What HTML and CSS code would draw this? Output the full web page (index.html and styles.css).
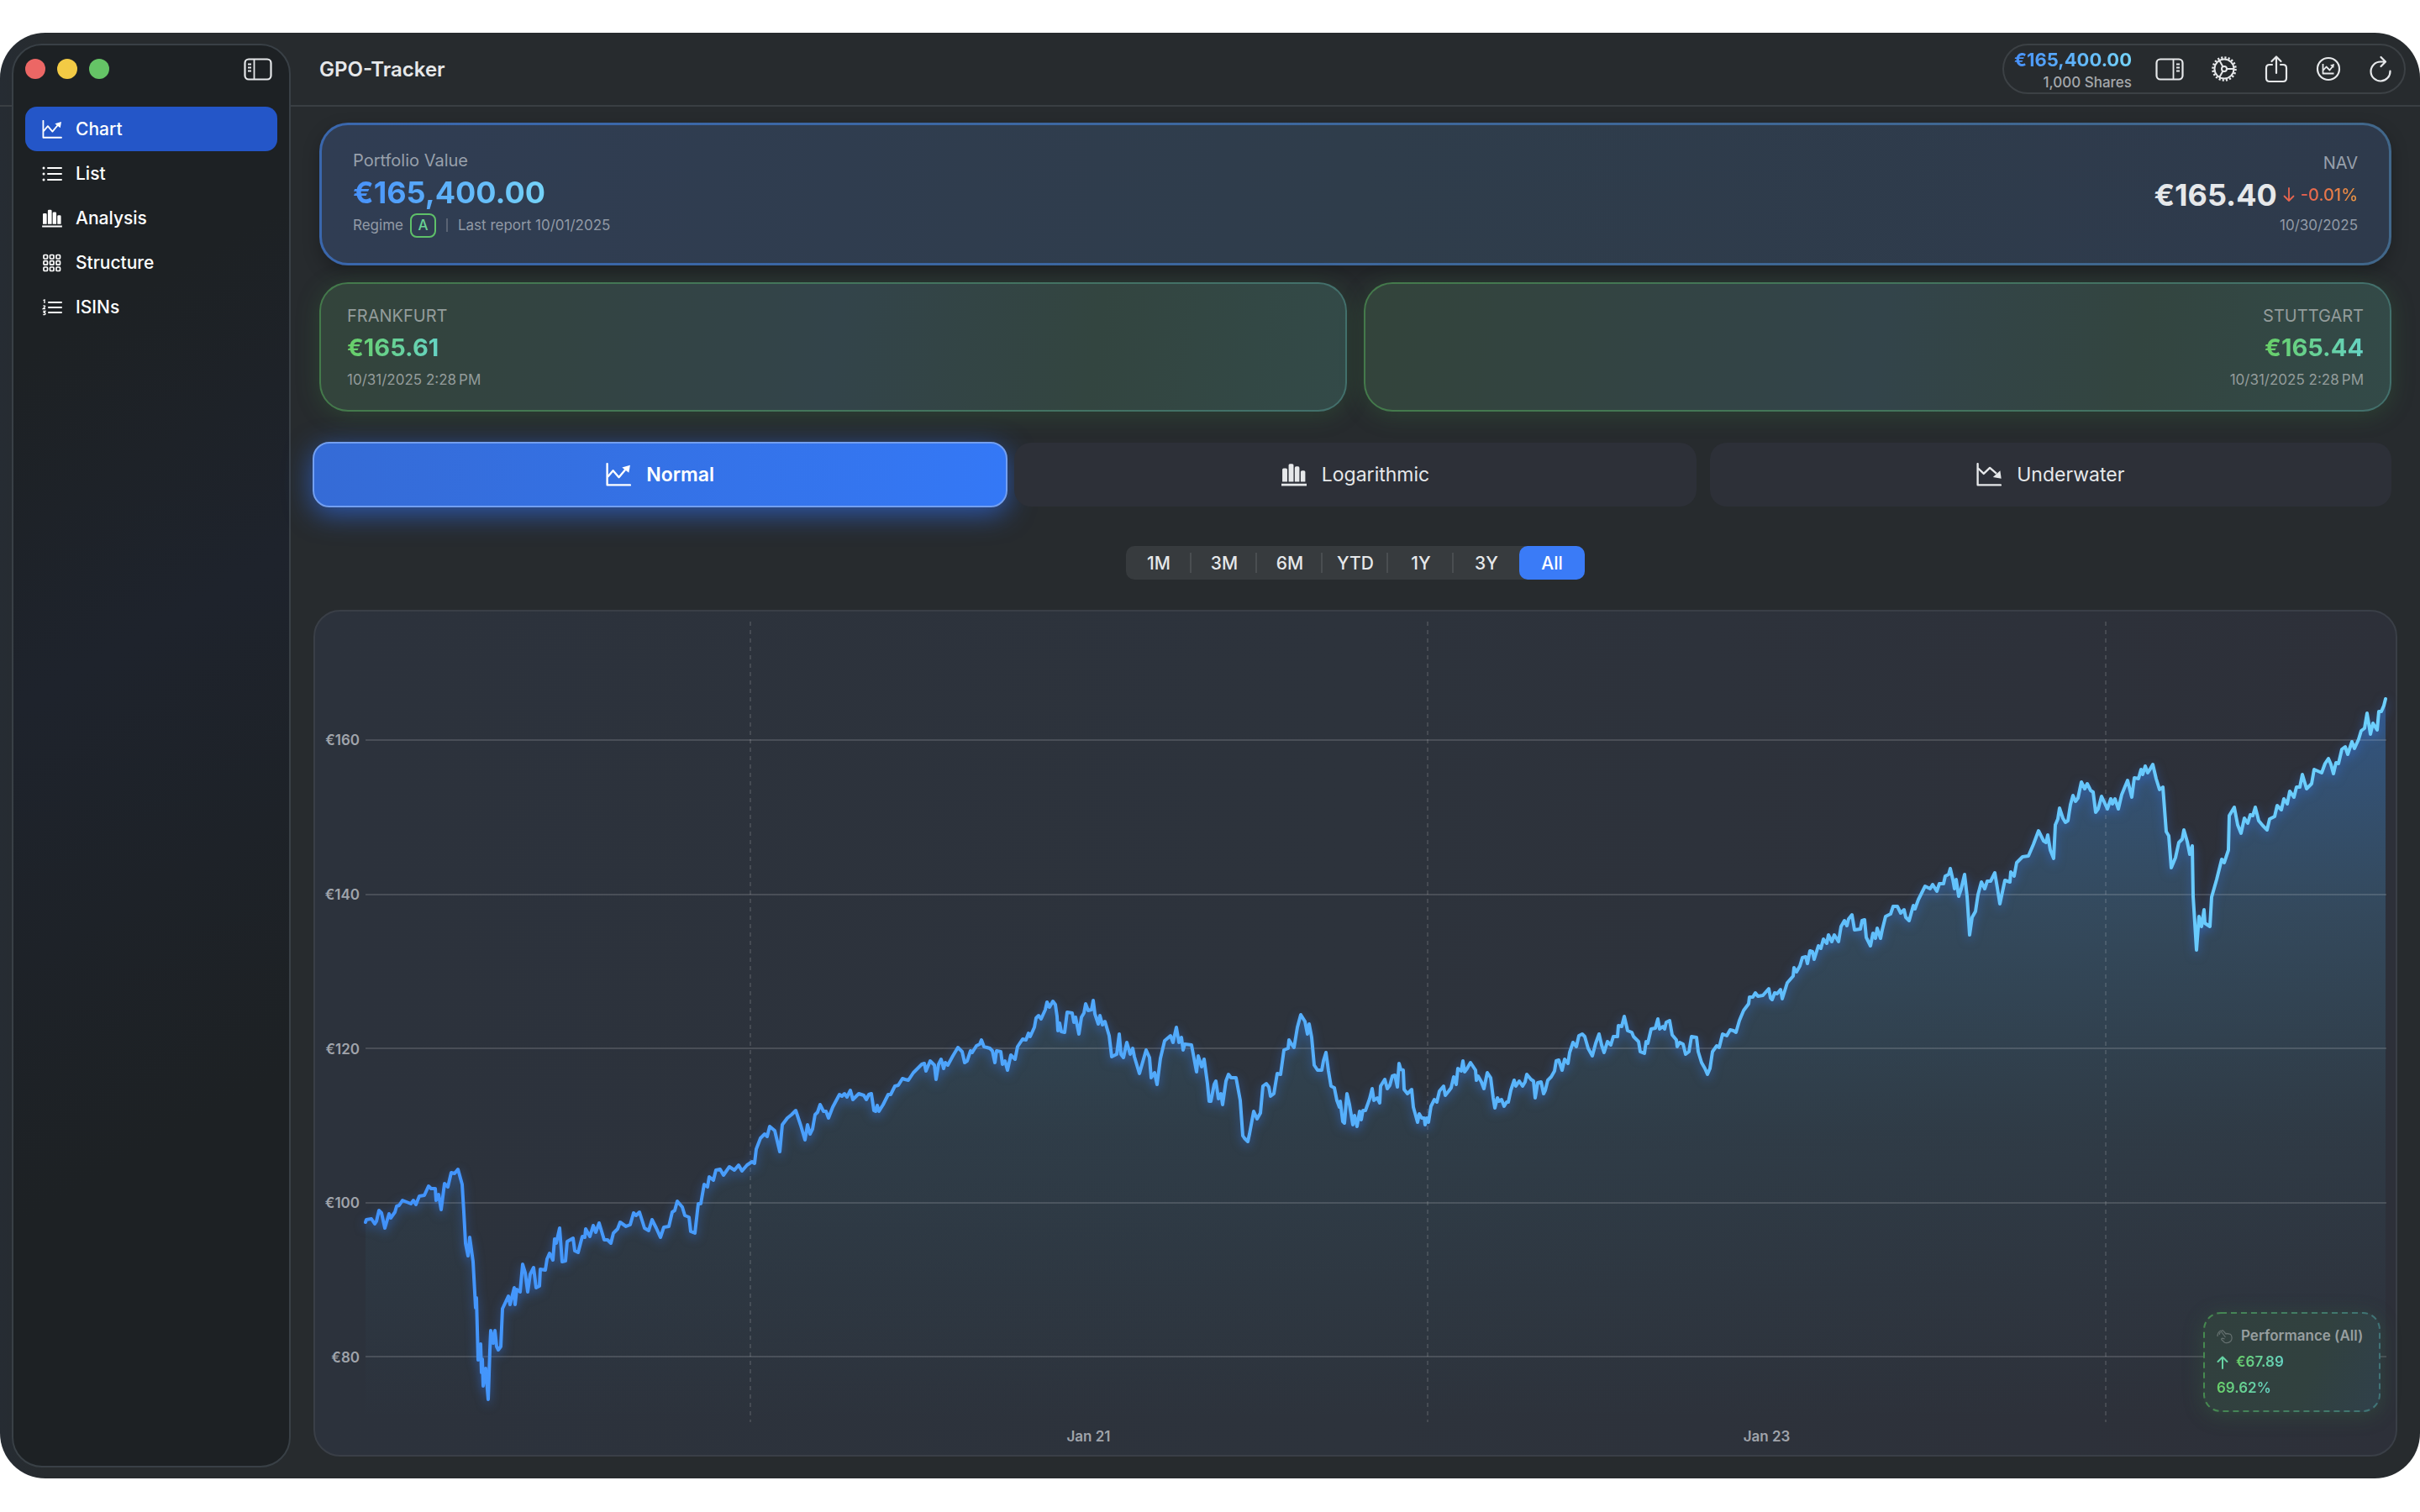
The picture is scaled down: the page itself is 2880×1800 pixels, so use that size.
FILE: index.html
```html
<!DOCTYPE html>
<html lang="en">
<head>
    <meta charset="UTF-8">
    <meta name="viewport" content="width=device-width, initial-scale=1.0">
    <title>GPO-Tracker</title>
    <link rel="stylesheet" href="styles.css">
</head>
<body>
    <!-- Shared icons -->
    <svg class="defs" width="0" height="0" aria-hidden="true">
        <symbol id="icon-up" viewBox="0 0 28 26">
            <path d="M1.500 1v23.500H27" fill="none" stroke="currentColor" stroke-width="2.200" stroke-linecap="round" stroke-linejoin="round"/>
            <path d="M2 15.500l6-7 6.500 7.500 8-9.500" fill="none" stroke="currentColor" stroke-width="2.200" stroke-linejoin="round"/>
            <path d="M27 2.500l-1.500 8.500-7.500-6z" fill="currentColor"/>
        </symbol>
        <symbol id="icon-down" viewBox="0 0 28 26">
            <path d="M1.500 1v23.500H27" fill="none" stroke="currentColor" stroke-width="2.200" stroke-linecap="round" stroke-linejoin="round"/>
            <path d="M2 6l6.200 6L15 5.500l7.500 6.500" fill="none" stroke="currentColor" stroke-width="2.200" stroke-linejoin="round"/>
            <path d="M26.500 8.500l1.200 9-9.200-1.700z" fill="currentColor"/>
        </symbol>
        <symbol id="icon-bars" viewBox="0 0 28 26">
            <path d="M1 7.500q0-1.500 1.500-1.500h2.500q1.500 0 1.500 1.500V21H1zM8 2.500Q8 1 9.500 1H12q1.500 0 1.500 1.500V21H8zM14.800 5.500q0-1.500 1.500-1.500h2.200q1.500 0 1.500 1.500V21h-5.200zM21.400 10q0-1.500 1.500-1.500H25q1.500 0 1.500 1.500v11h-5.100zM0 23h28v2.500H0z" fill="currentColor"/>
        </symbol>
        <symbol id="icon-list" viewBox="0 0 24 20">
            <path d="M7 3h16M7 10h16M7 17h16" stroke="currentColor" stroke-width="2" stroke-linecap="round"/>
            <circle cx="2" cy="3" r="1.500" fill="currentColor"/><circle cx="2" cy="10" r="1.500" fill="currentColor"/><circle cx="2" cy="17" r="1.500" fill="currentColor"/>
        </symbol>
        <symbol id="icon-grid" viewBox="0 0 24 22">
            <g fill="none" stroke="currentColor" stroke-width="1.700">
                <rect x="2" y="1.500" width="4.500" height="4.500" rx="1"/><rect x="9.500" y="1.500" width="4.500" height="4.500" rx="1"/><rect x="17" y="1.500" width="4.500" height="4.500" rx="1"/>
                <rect x="2" y="8.700" width="4.500" height="4.500" rx="1"/><rect x="9.500" y="8.700" width="4.500" height="4.500" rx="1"/><rect x="17" y="8.700" width="4.500" height="4.500" rx="1"/>
                <rect x="2" y="16" width="4.500" height="4.500" rx="1"/><rect x="9.500" y="16" width="4.500" height="4.500" rx="1"/><rect x="17" y="16" width="4.500" height="4.500" rx="1"/>
            </g>
        </symbol>
        <symbol id="icon-numbers" viewBox="0 0 24 20">
            <path d="M8 4h15M8 10h15M8 16h15" stroke="currentColor" stroke-width="2" stroke-linecap="round"/>
            <path d="M1.500 1.700L3 1v4M1.300 8.300q1.500-1 2.300 0 .2.900-2.200 3.200h2.600M1.300 14.500h2.500l-1.500 1.700q1.700 0 1.700 1.400-.4 1.600-2.800.9" fill="none" stroke="currentColor" stroke-width="1.300"/>
        </symbol>
        <symbol id="icon-panel" viewBox="0 0 34 27">
            <rect x="1.500" y="1.500" width="31" height="24" rx="4.500" fill="none" stroke="currentColor" stroke-width="2.200"/>
            <path d="M12.500 2v23M5 7.500h4M5 11.500h4M5 15.500h4" fill="none" stroke="currentColor" stroke-width="1.800"/>
        </symbol>
    </svg>

    <div class="window">
        <aside class="sidebar">
            <div class="sidebar-top">
                <span class="light red"></span>
                <span class="light yellow"></span>
                <span class="light green"></span>
                <button class="icon-btn toggle" aria-label="Toggle sidebar"><svg width="34" height="27"><use href="#icon-panel"/></svg></button>
            </div>
            <nav>
                <a href="#chart" class="active"><svg><use href="#icon-up"/></svg>Chart</a>
                <a href="#list"><svg><use href="#icon-list"/></svg>List</a>
                <a href="#analysis"><svg><use href="#icon-bars"/></svg>Analysis</a>
                <a href="#structure"><svg><use href="#icon-grid"/></svg>Structure</a>
                <a href="#isins"><svg><use href="#icon-numbers"/></svg>ISINs</a>
            </nav>
        </aside>

        <header>
            <h1>GPO-Tracker</h1>
            <div class="toolbar">
                <div class="summary">
                    <strong class="blue-text">€165,400.00</strong>
                    <span>1,000 Shares</span>
                </div>
                <button class="icon-btn" aria-label="Toggle inspector"><svg class="flip" width="34" height="27"><use href="#icon-panel"/></svg></button>
                <button class="icon-btn" aria-label="Settings">
                    <svg width="34" height="32" viewBox="0 0 34 32" fill="none" stroke="currentColor" stroke-width="2">
                        <circle cx="17" cy="16" r="13.500" stroke-width="2.600" stroke-dasharray="2.200 2.040"/>
                        <circle cx="17" cy="16" r="11.500"/>
                        <circle cx="17" cy="16" r="3"/>
                        <path d="M20 16h8.500M15.500 13.400l-4.200-7.300M15.500 18.600l-4.200 7.300"/>
                    </svg>
                </button>
                <button class="icon-btn" aria-label="Share">
                    <svg width="34" height="34" viewBox="0 0 34 34" fill="none" stroke="currentColor" stroke-width="2.200" stroke-linecap="round" stroke-linejoin="round">
                        <path d="M12 12H9q-4 0-4 4v12q0 4 4 4h16q4 0 4-4V16q0-4-4-4h-3M17 22V3M11.500 8L17 2.500 22.500 8"/>
                    </svg>
                </button>
                <button class="icon-btn" aria-label="Performance">
                    <svg width="34" height="32" viewBox="0 0 34 32" fill="none" stroke="currentColor" stroke-width="2.200">
                        <circle cx="17" cy="16" r="13"/>
                        <path d="M10.500 10v11.500h13M11 17.500l3.500-4 4 4 4-5" stroke-width="1.800" stroke-linejoin="round"/>
                        <path d="M24 10l-.8 5-4.200-3.500z" fill="currentColor" stroke="none"/>
                    </svg>
                </button>
                <button class="icon-btn" aria-label="Refresh">
                    <svg width="34" height="34" viewBox="0 0 34 34" fill="none" stroke="currentColor" stroke-width="2.200" stroke-linecap="round" stroke-linejoin="round">
                        <path d="M28.500 19.500A11.500 11.500 0 1 1 17 8.500h5M17.500 3l5.500 5.500-5.500 5.500"/>
                    </svg>
                </button>
            </div>
        </header>

        <main>
            <!-- Portfolio -->
            <section class="card portfolio">
                <div>
                    <h2>Portfolio Value</h2>
                    <strong class="big blue-text">€165,400.00</strong>
                    <p class="small report">Regime <span class="badge">A</span> <i></i> Last report 10/01/2025</p>
                </div>
                <div class="right">
                    <h2>NAV</h2>
                    <div class="nav-value">
                        <strong class="big">€165.40</strong>
                        <svg width="14" height="20" viewBox="0 0 14 20" fill="none" stroke="#e8654f" stroke-width="1.800" stroke-linecap="round" stroke-linejoin="round"><path d="M7 2v15M1.500 11.500L7 17l5.500-5.500"/></svg>
                        <span class="change">-0.01%</span>
                    </div>
                    <p class="small">10/30/2025</p>
                </div>
            </section>

            <!-- Exchanges -->
            <div class="exchanges">
                <section class="card exchange">
                    <h2>FRANKFURT</h2>
                    <strong class="price green-text">€165.61</strong>
                    <p class="small">10/31/2025 2:28&#8239;PM</p>
                </section>
                <section class="card exchange right">
                    <h2>STUTTGART</h2>
                    <strong class="price green-text">€165.44</strong>
                    <p class="small">10/31/2025 2:28&#8239;PM</p>
                </section>
            </div>

            <!-- Chart mode -->
            <div class="modes">
                <button class="active"><svg width="30" height="28"><use href="#icon-up"/></svg>Normal</button>
                <button><svg width="30" height="28"><use href="#icon-bars"/></svg>Logarithmic</button>
                <button><svg width="30" height="28"><use href="#icon-down"/></svg>Underwater</button>
            </div>

            <!-- Time range -->
            <div class="ranges">
                <button>1M</button>
                <button>3M</button>
                <button>6M</button>
                <button>YTD</button>
                <button>1Y</button>
                <button>3Y</button>
                <button class="active">All</button>
            </div>

            <section class="chart">
                <div class="y-axis">
                    <span>€160</span>
                    <span>€140</span>
                    <span>€120</span>
                    <span>€100</span>
                    <span>€80</span>
                </div>
                <svg class="plot" viewBox="0 0 2405 953" preserveAspectRatio="none" role="img" aria-label="NAV history">
                    <defs>
                        <linearGradient id="lineColor" gradientUnits="userSpaceOnUse" x1="0" y1="0" x2="2405" y2="0">
                            <stop offset="0" stop-color="#4192fb"/>
                            <stop offset="1" stop-color="#6dd0fc"/>
                        </linearGradient>
                        <linearGradient id="areaColor" gradientUnits="userSpaceOnUse" x1="0" y1="92" x2="0" y2="953">
                            <stop offset="0" stop-color="#3a8cf0" stop-opacity=".4"/>
                            <stop offset=".3" stop-color="#4a9ad0" stop-opacity=".23"/>
                            <stop offset=".6" stop-color="#46a0c0" stop-opacity=".09"/>
                            <stop offset="1" stop-color="#46a0c0" stop-opacity="0"/>
                        </linearGradient>
                    </defs>
                    <path id="area" fill="url(#areaColor)"/>
                    <g class="grid">
                        <path d="M0 141H2405M0 325H2405M0 508H2405M0 692H2405M0 875H2405"/>
                        <path class="dashed" d="M458 0V953M1264 0V953M2071 0V953"/>
                    </g>
                    <path id="line" stroke="url(#lineColor)"/>
                </svg>
                <div class="x-axis">
                    <span></span>
                    <span>Jan 21</span>
                    <span>Jan 23</span>
                    <span></span>
                </div>

                <div class="performance">
                    <svg class="outline" aria-hidden="true">
                        <defs>
                            <linearGradient id="outlineColor" x1="0" y1="0" x2="1" y2="0">
                                <stop offset="0" stop-color="#46894f"/>
                                <stop offset="1" stop-color="#3f7377"/>
                            </linearGradient>
                        </defs>
                        <rect x="1" y="1" rx="20"/>
                    </svg>
                    <div class="perf-title">
                        <svg width="20" height="18" viewBox="0 0 20 18" fill="none" stroke="currentColor" stroke-width="1.200" stroke-linejoin="round"><path d="M1 9Q1 4 5 2M10.500 10L6 4q-.8-1.800.6-2.200 1-.1 1.600.8L11 6q1-1 2 0 1-.8 2 .3 1.500-.5 2.500 1.700 1.500 4-.7 6.500-3 3.300-7.300 1.700L6 13q-1-1.300.5-1.800l3 .6M3.500 7Q3 5 4.700 4"/></svg>
                        Performance (All)
                    </div>
                    <div class="perf-row">
                        <svg width="14" height="16" viewBox="0 0 14 16" fill="none" stroke="#66d3a4" stroke-width="2" stroke-linecap="round" stroke-linejoin="round"><path d="M7 15V1.500M1.500 7L7 1.500 12.500 7"/></svg>
                        <span class="green-text">€67.89</span>
                    </div>
                    <div class="perf-row"><span class="green-text">69.62%</span></div>
                </div>
            </section>
        </main>
    </div>

    <script src="chart.js"></script>
</body>
</html>
```
FILE: styles.css
```css
* {
    box-sizing: border-box;
}
body {
    margin: 0;
    padding: 39px 0 40px;
    min-height: 100vh;
    display: flex;
    background: #fff;
    color: #e6e8ea;
    font-family: Inter, "Liberation Sans", sans-serif;
}
h1, h2, p {
    margin: 0;
}
button {
    border: none;
    padding: 0;
    background: none;
    color: inherit;
    font-family: inherit;
}
svg {
    flex: none;
}
.defs {
    position: absolute;
}
.window {
    flex: 1;
    display: grid;
    grid-template-columns: 346px 1fr;
    grid-template-rows: 88px 1fr;
    border-radius: 54px;
    overflow: hidden;
    background: linear-gradient(#3a3f43, #3a3f43) 0 86px / 100% 2px no-repeat, linear-gradient(90deg, #262c33, #272b2e 2%);
}

/* Sidebar */
.sidebar {
    grid-row: 1 / 3;
    margin: 13px 0 13px 14px;
    padding: 0 14px;
    border: 2px solid #394046;
    border-radius: 36px;
    background: linear-gradient(150deg, #1d2124 20%, #1e232c 42%, #1d2124 75%);
}
.sidebar-top {
    display: flex;
    align-items: center;
    gap: 14px;
    height: 56px;
    margin-bottom: 17px;
}
.light {
    width: 24px;
    height: 24px;
    border-radius: 50%;
}
.red {
    background: #ec6765;
}
.yellow {
    background: #f3cb45;
}
.green {
    background: #65c466;
}
.icon-btn {
    display: flex;
    align-items: center;
    justify-content: center;
}
.toggle {
    margin-left: auto;
    margin-right: 6px;
}
.flip {
    transform: scaleX(-1);
}
nav a {
    display: flex;
    align-items: center;
    gap: 16px;
    height: 53px;
    padding-left: 20px;
    border-radius: 14px;
    color: #fff;
    font-size: 21px;
    font-weight: 500;
    text-decoration: none;
}
nav a svg {
    width: 24px;
    height: 22px;
}
nav a.active {
    background: #2456c8;
}

/* Title bar */
header {
    display: flex;
    align-items: center;
    justify-content: space-between;
    padding: 0 17px 2px 34px;
}
h1 {
    font-size: 24px;
    font-weight: 600;
}
.toolbar {
    display: flex;
    align-items: center;
    gap: 28px;
    height: 60px;
    padding: 0 11px 0 12px;
    border: 2px solid #3c4145;
    border-radius: 30px;
}
.summary {
    display: flex;
    flex-direction: column;
    align-items: flex-end;
    gap: 4px;
    padding-top: 3px;
    font-size: 17px;
    font-weight: 500;
    line-height: 22px;
    color: #a5a8ab;
}
.summary strong {
    font-size: 22px;
    line-height: 24px;
}
.summary + .icon-btn {
    margin-right: 3px;
}
.blue-text, .green-text, .change {
    background: linear-gradient(90deg, #4791fb, #75d3f8);
    background-clip: text;
    -webkit-background-clip: text;
    color: transparent;
}
.green-text {
    background-image: linear-gradient(90deg, #68cf66, #66d3c4);
}
.change {
    background-image: linear-gradient(90deg, #e75d50, #e99543);
    font-size: 20px;
    font-weight: 500;
}

/* Cards */
main {
    display: flex;
    flex-direction: column;
    padding: 19px 34px 26px;
}
.card {
    border: 3px solid transparent;
    border-radius: 34px;
}
.card h2 {
    color: #98a0ab;
    font-size: 20px;
    font-weight: 400;
    line-height: 24px;
}
.small {
    color: #929aa6;
    font-size: 17px;
    line-height: 24px;
}
.big {
    font-size: 36px;
    line-height: 48px;
}
.right {
    text-align: right;
}
.portfolio {
    display: flex;
    justify-content: space-between;
    align-items: center;
    height: 170px;
    padding: 0 37px;
    background: linear-gradient(90deg, #303d53, #2f3d4b 50%, #2e3a4c) padding-box, linear-gradient(90deg, #3a67ad, #41678a) border-box;
    box-shadow: 0 8px 20px rgba(0, 0, 0, .25);
}
.portfolio > div {
    display: flex;
    flex-direction: column;
    align-items: flex-start;
}
.portfolio h2 {
    margin-bottom: 2px;
}
.portfolio > .right {
    align-items: flex-end;
}
.report {
    display: flex;
    align-items: center;
    gap: 8px;
    height: 30px;
}
.report i {
    width: 2px;
    height: 16px;
    margin: 0 4px;
    background: #596373;
}
.badge {
    width: 31px;
    height: 29px;
    border: 2px solid #5fc069;
    border-radius: 8px;
    color: #69d394;
    font-weight: 500;
    text-align: center;
}
.nav-value {
    display: flex;
    align-items: center;
    gap: 7px;
}
.exchanges {
    display: grid;
    grid-template-columns: 1fr 1fr;
    gap: 20px;
    margin-top: 20px;
}
.exchange {
    display: flex;
    flex-direction: column;
    align-items: flex-start;
    justify-content: center;
    height: 154px;
    padding: 2px 31px 0;
    border-width: 2px;
    background: linear-gradient(100deg, #33443b, #33444a 50%, #334540 75%, #334a48) padding-box, linear-gradient(90deg, #447a4b, #43706c) border-box;
    box-shadow: 0 4px 28px rgba(60, 130, 70, .28);
}
.exchange.right {
    align-items: flex-end;
}
.exchange h2, .exchange .small {
    color: #939c9b;
}
.price {
    font-size: 29px;
    line-height: 52px;
}

/* Chart controls */
.modes {
    display: grid;
    grid-template-columns: repeat(3, 1fr);
    gap: 16px;
    margin-top: 37px;
}
.modes button {
    display: flex;
    align-items: center;
    justify-content: center;
    gap: 18px;
    height: 76px;
    border-radius: 20px;
    background: #2d3038;
    font-size: 23px;
}
.modes .active {
    height: 78px;
    margin: -1px -8px;
    border: 2px solid #739ff0;
    background: linear-gradient(90deg, #356bd6, #3478f6);
    color: #fff;
    font-weight: 600;
    box-shadow: 0 8px 32px rgba(48, 110, 240, .65);
}
.ranges {
    display: flex;
    align-self: center;
    margin-top: 47px;
    border-radius: 10px;
    background: #373b3e;
}
.ranges button {
    width: 78px;
    height: 40px;
    background: linear-gradient(#4a4e51, #4a4e51) right / 2px 24px no-repeat;
    font-size: 21px;
    font-weight: 500;
}
.ranges button:nth-child(6) {
    background: none;
}
.ranges .active {
    border-radius: 10px;
    background: #3a7bf7;
    color: #fff;
}

/* Chart */
.chart {
    position: relative;
    flex: 1;
    display: grid;
    grid-template-columns: 53px 1fr;
    grid-template-rows: 1fr 34px;
    column-gap: 7px;
    margin: 36px -7px 0;
    padding: 12px 11px 5px 0;
    border: 2px solid #3a3f47;
    border-radius: 32px;
    background: linear-gradient(90deg, #2c323c, #2d333c 50%, #2d3039);
    color: #a0a4ab;
    font-size: 17px;
    font-weight: 600;
    line-height: 20px;
}
.y-axis {
    display: flex;
    flex-direction: column;
    justify-content: space-between;
    align-items: flex-end;
    padding: 131px 0 67px;
}
.plot {
    width: 100%;
    height: 100%;
    min-height: 0;
    overflow: visible;
}
.grid path {
    stroke: rgba(255, 255, 255, .14);
    stroke-width: 2;
    vector-effect: non-scaling-stroke;
}
.grid .dashed {
    stroke: rgba(255, 255, 255, .12);
    stroke-dasharray: 5 5;
}
#line {
    fill: none;
    stroke-width: 4;
    stroke-linejoin: round;
    stroke-linecap: round;
    vector-effect: non-scaling-stroke;
    filter: drop-shadow(0 4px 6px rgba(50, 120, 240, .5));
}
.x-axis {
    grid-column: 2;
    display: grid;
    grid-template-columns: 457fr 807fr 807fr 334fr;
    align-items: center;
    text-align: center;
}

/* Performance box */
.performance {
    position: absolute;
    right: 18px;
    bottom: 51px;
    width: 211px;
    padding: 13px 16px;
    border-radius: 21px;
    background: linear-gradient(110deg, #31403e, #31413f 60%, #30404a);
    box-shadow: 0 4px 24px rgba(60, 130, 70, .25);
    color: #979e9f;
    font-size: 17px;
    line-height: 31px;
    white-space: nowrap;
}
.outline {
    position: absolute;
    left: 0;
    top: 0;
    width: 100%;
    height: 100%;
}
.outline rect {
    width: calc(100% - 2px);
    height: calc(100% - 2px);
    fill: none;
    stroke: url(#outlineColor);
    stroke-width: 2;
    stroke-dasharray: 7 5;
}
.perf-title, .perf-row {
    display: flex;
    align-items: center;
    gap: 9px;
}
.perf-title svg {
    opacity: .5;
}
```
FILE: chart.js
```js
// x,y pairs in plot units (2405 x 953)
const points = `0,715 1,712 7,711 11,717 13,714 16,701 19,704 23,722 28,705 30,710 35,703 37,696 40,695 44,689 49,691 54,693 57,689 60,694 64,684 70,683
75,672 78,675 83,675 84,689 87,682 90,700 94,669 98,673 102,656 106,657 110,652 115,670 117,703 119,740 122,755 124,733 128,762 131,817 132,805 134,879
137,860 138,894 139,878 140,910 143,889 146,926 148,867 149,844 152,859 154,844 156,863 158,867 161,863 163,818 170,803 172,813 177,793 178,813 180,795 184,798
187,765 190,775 193,798 196,777 200,769 203,793 207,791 208,771 214,772 216,759 219,752 223,760 225,735 227,740 231,722 234,762 238,761 240,738 247,734 249,749
253,751 258,732 261,733 262,723 267,732 271,719 274,727 278,716 284,736 288,736 292,740 295,728 300,723 303,715 310,720 315,718 319,704 322,707 326,703 332,722
337,725 341,712 346,722 351,733 355,721 361,720 365,703 368,701 371,690 377,697 380,707 385,709 387,726 392,728 396,693 399,693 403,670 407,673 409,661 414,665
417,653 422,652 426,659 433,649 439,653 444,647 448,654 454,647 460,643 463,645 465,628 470,615 475,610 478,613 481,601 487,606 493,631 496,599 502,591 507,587
512,582 518,600 523,617 526,599 529,610 532,604 535,587 538,584 541,575 545,583 548,583 551,591 556,578 564,563 567,565 570,562 573,566 577,558 580,569 587,562
593,564 596,569 599,563 602,562 605,582 607,583 609,576 611,583 616,575 622,563 625,563 630,553 634,552 639,544 642,545 646,546 652,537 656,533 662,527 665,526
667,535 672,523 677,528 679,545 682,527 685,521 688,532 690,525 693,528 699,517 705,507 710,512 713,525 716,523 720,511 722,513 727,505 731,503 733,498 736,506
743,508 746,511 749,525 751,511 756,512 758,527 761,523 764,534 768,516 773,521 776,506 782,497 786,498 789,490 791,494 796,483 798,472 801,469 804,473 809,462
811,453 814,459 818,452 821,456 823,470 824,487 826,478 828,488 832,489 835,465 841,466 843,477 845,471 849,491 852,471 855,466 857,455 860,463 864,462 866,451
868,467 872,479 874,469 877,480 880,476 885,493 888,518 894,515 897,491 899,515 902,519 906,501 910,515 913,508 915,518 921,538 925,524 929,510 933,519 935,543
939,537 942,551 946,520 951,499 958,493 961,501 965,483 968,501 971,495 973,510 975,503 983,504 986,520 989,536 991,517 995,530 998,521 1002,550 1004,571 1006,571
1010,551 1012,547 1015,568 1018,562 1020,575 1024,547 1027,539 1030,543 1036,543 1041,570 1044,612 1046,615 1050,619 1052,610 1057,583 1061,592 1065,585 1068,553 1072,550 1075,554
1077,565 1081,562 1085,538 1089,539 1093,510 1098,508 1099,498 1102,503 1105,507 1109,483 1113,468 1118,476 1121,491 1123,479 1126,495 1129,528 1133,534 1138,534 1140,523 1143,513
1146,535 1149,553 1153,555 1156,570 1159,578 1160,571 1163,595 1165,597 1168,562 1171,575 1175,599 1177,588 1180,601 1183,583 1185,593 1187,582 1190,582 1195,568 1198,556 1200,570
1204,567 1207,573 1208,553 1213,545 1216,556 1219,552 1222,541 1225,540 1228,554 1230,526 1232,533 1235,534 1236,557 1240,562 1245,557 1247,578 1252,596 1254,586 1257,591 1260,591
1261,599 1263,591 1265,596 1268,577 1272,569 1275,572 1278,559 1283,553 1285,564 1289,559 1292,555 1295,542 1298,551 1300,532 1304,535 1306,523 1308,536 1311,532 1315,525 1321,534
1322,546 1324,541 1328,548 1331,556 1335,537 1339,543 1342,567 1344,579 1347,567 1349,571 1352,569 1355,577 1358,572 1360,572 1363,558 1367,546 1369,553 1373,547 1377,553 1380,548
1382,539 1387,545 1390,547 1392,567 1395,549 1399,548 1402,562 1404,558 1407,546 1411,542 1415,535 1417,523 1420,522 1424,534 1427,521 1431,526 1433,513 1437,501 1441,506 1444,493
1448,491 1451,494 1455,508 1460,517 1464,502 1468,491 1471,504 1474,513 1478,500 1482,504 1485,494 1490,494 1491,481 1495,482 1498,470 1502,487 1507,489 1509,494 1515,500 1517,512
1522,514 1524,500 1526,502 1530,485 1535,484 1538,473 1540,485 1544,482 1546,485 1548,477 1552,475 1555,492 1560,498 1561,506 1564,501 1568,503 1571,515 1575,512 1578,494 1584,495
1586,512 1590,525 1594,532 1597,539 1600,532 1603,512 1608,505 1611,507 1615,491 1620,493 1624,486 1628,487 1631,489 1635,475 1640,463 1646,455 1647,447 1651,447 1654,442 1657,446
1663,445 1670,437 1672,448 1674,450 1677,442 1680,443 1684,438 1686,449 1692,430 1699,422 1700,412 1703,417 1707,410 1710,400 1714,399 1716,407 1719,392 1722,393 1724,402 1729,386
1732,389 1735,378 1739,383 1741,373 1745,381 1748,373 1753,381 1756,363 1760,356 1763,362 1765,354 1769,349 1772,367 1779,366 1781,356 1784,355 1786,376 1791,386 1794,371 1797,377
1799,365 1803,377 1805,367 1809,351 1815,348 1818,339 1823,339 1827,347 1831,343 1833,352 1837,356 1842,338 1844,342 1848,331 1856,315 1862,318 1865,313 1870,321 1873,312 1878,312
1880,303 1884,301 1886,294 1889,307 1891,318 1893,307 1896,327 1899,318 1903,301 1906,327 1909,373 1912,352 1916,345 1919,325 1923,310 1927,318 1930,309 1934,309 1939,299 1942,317
1945,336 1951,308 1957,310 1958,298 1962,303 1965,287 1972,280 1979,279 1985,265 1991,249 1997,261 2000,263 2002,254 2005,272 2009,282 2011,242 2014,235 2016,222 2020,234 2023,239
2026,237 2029,218 2032,207 2035,214 2038,210 2042,191 2046,199 2049,193 2053,201 2056,203 2059,227 2062,223 2066,208 2073,223 2077,211 2079,217 2082,211 2086,223 2090,206 2097,189
2102,209 2105,186 2110,187 2113,176 2115,182 2118,172 2121,180 2123,177 2127,170 2131,187 2135,200 2139,197 2143,250 2146,255 2149,293 2154,281 2158,263 2162,259 2164,248 2168,262
2171,277 2174,267 2175,327 2179,391 2182,351 2185,363 2188,343 2189,359 2195,363 2197,328 2203,307 2209,283 2212,287 2217,272 2218,231 2224,221 2228,242 2232,252 2236,234 2240,240
2243,230 2246,231 2249,221 2253,237 2258,243 2263,248 2266,235 2272,232 2275,219 2280,224 2283,211 2287,217 2290,202 2295,209 2298,197 2302,197 2305,182 2310,199 2316,193 2319,176
2328,180 2332,169 2336,163 2339,170 2342,181 2345,168 2348,169 2352,152 2356,149 2359,158 2364,143 2367,151 2372,140 2375,130 2379,127 2382,109 2386,134 2389,121 2394,129 2396,107
2399,107 2402,100 2404,92`.split(/\s+/);

const line = 'M' + points.join('L');
document.getElementById('line').setAttribute('d', line);
document.getElementById('area').setAttribute('d', line + 'V953H0Z');
```
